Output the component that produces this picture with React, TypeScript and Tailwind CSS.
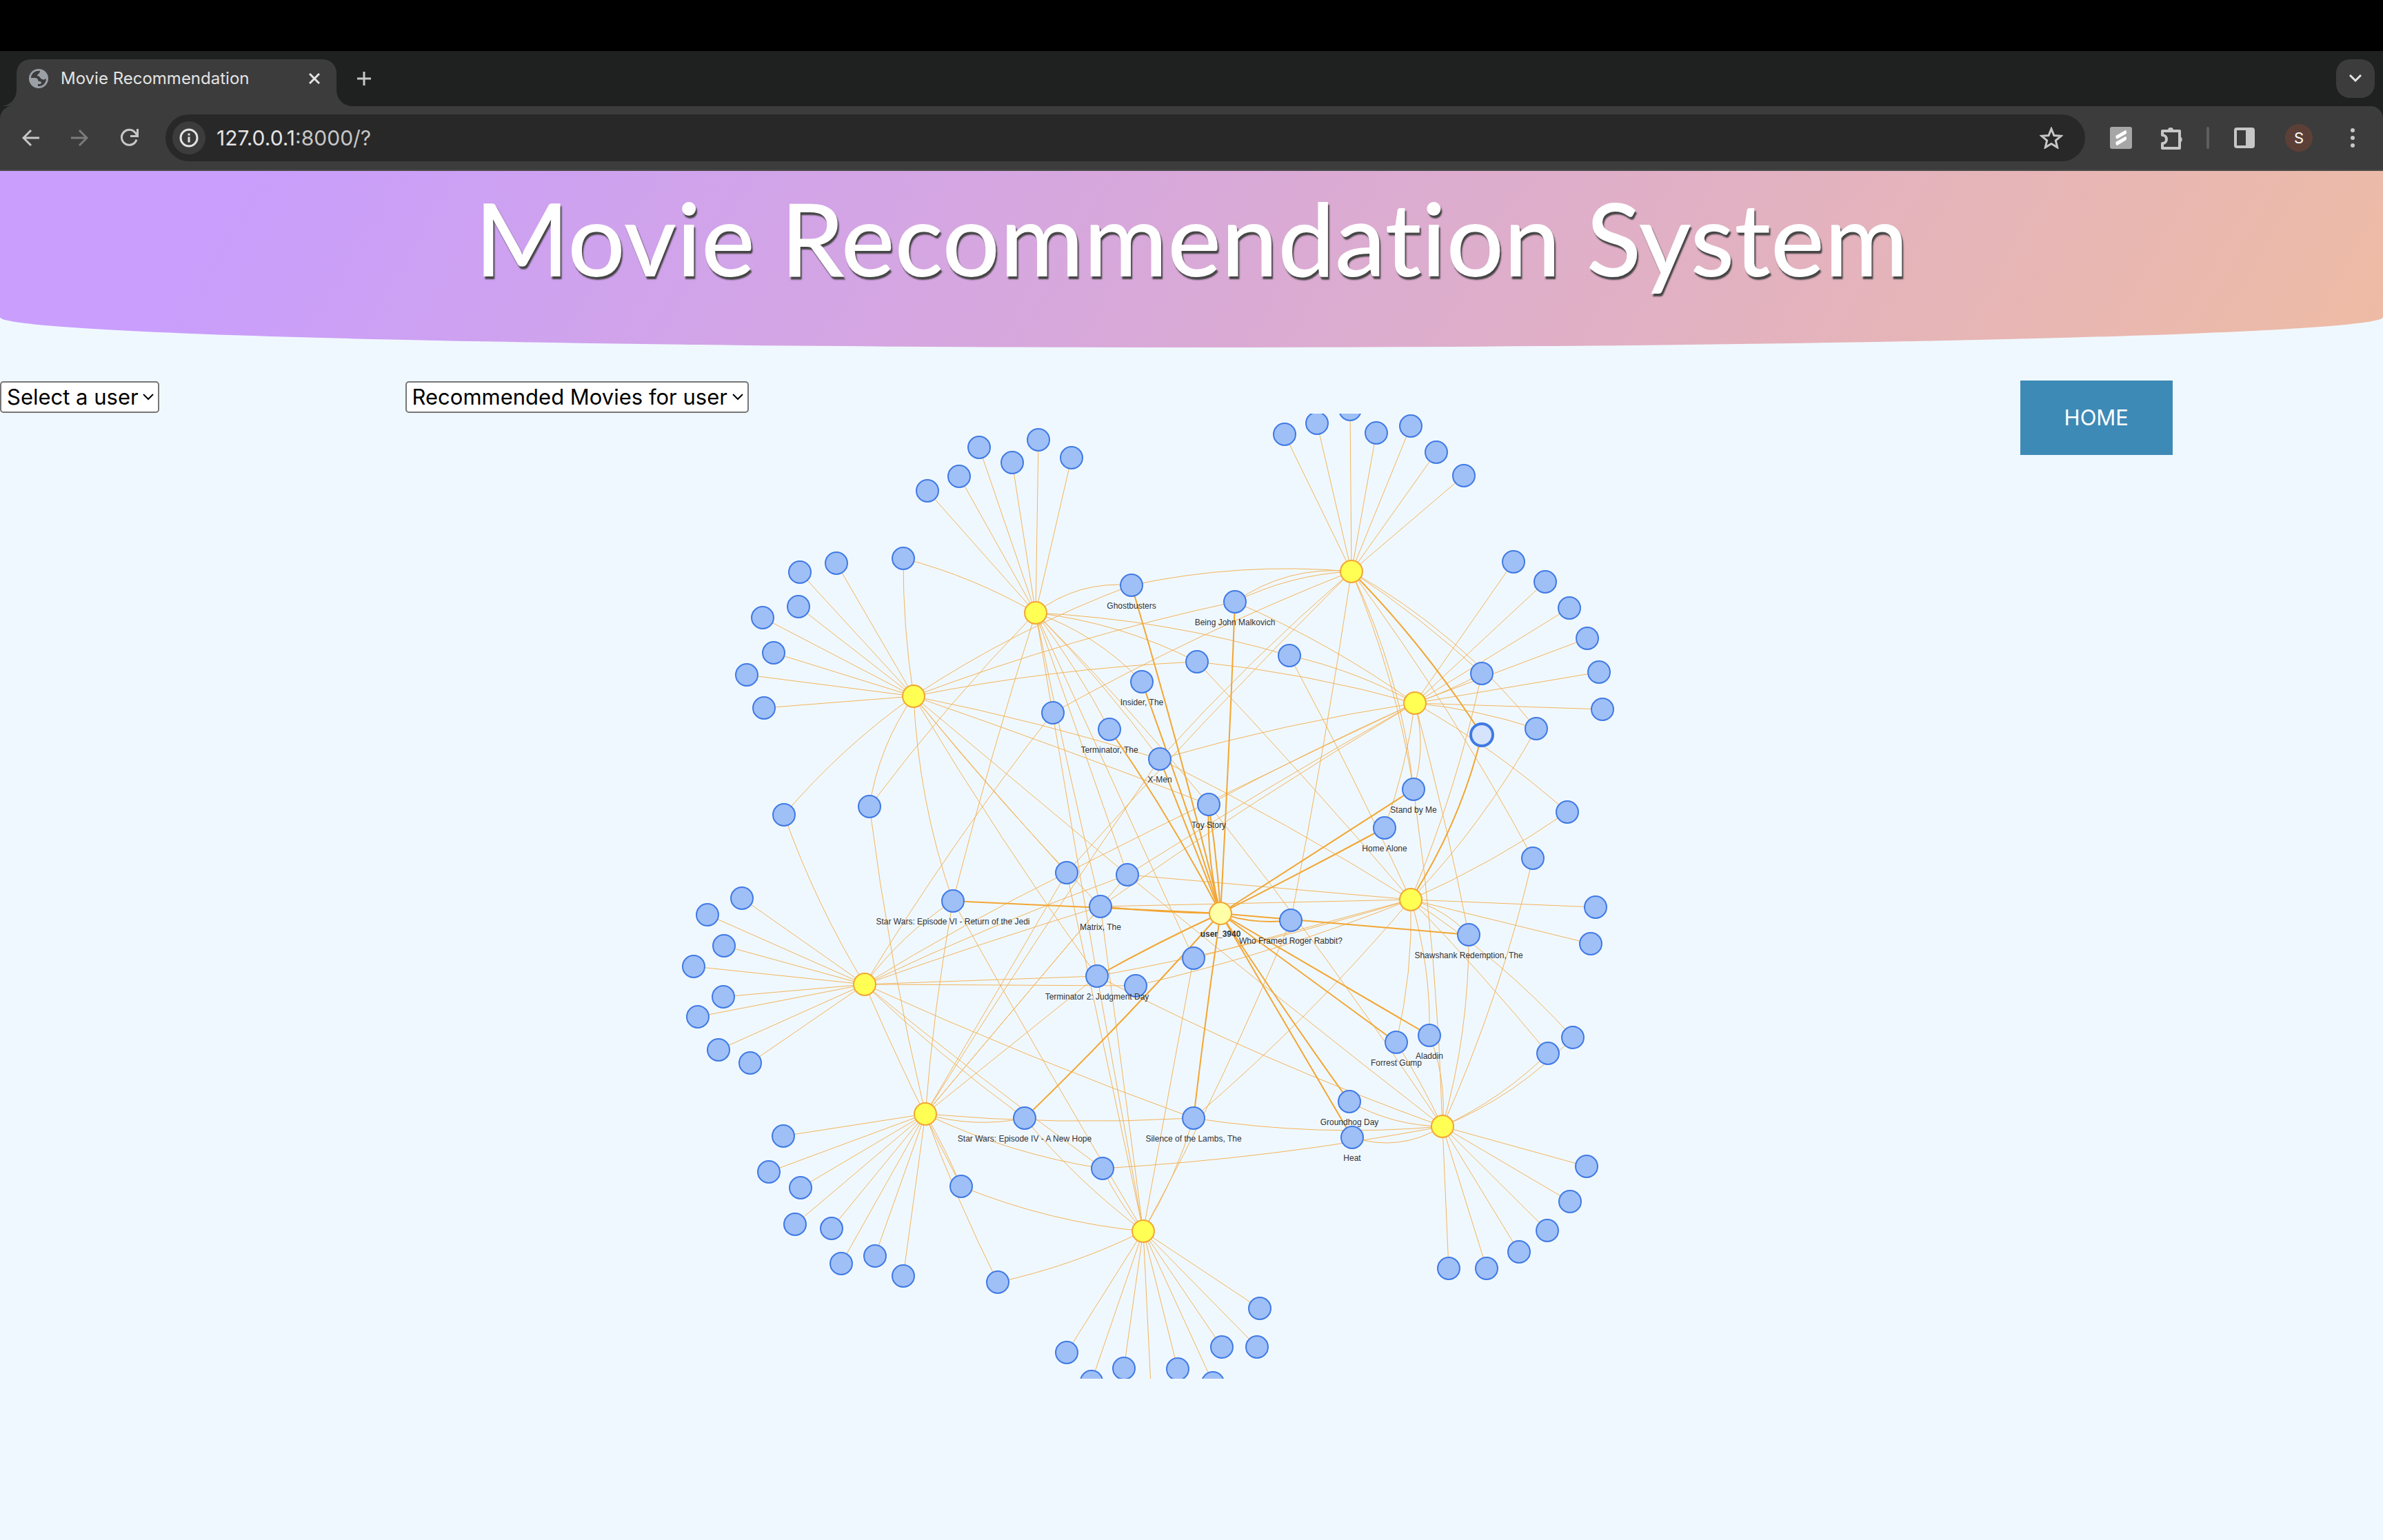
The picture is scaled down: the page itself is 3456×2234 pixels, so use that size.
import React from "react";

type Node = { x: number; y: number; kind?: "user" | "active" | "selected"; label?: string };
type Edge = [string, string, number?, boolean?];

const users: Record<string, Node> = {
  y1: { x: 1502, y: 889, kind: "user" },
  y2: { x: 1325, y: 1010, kind: "user" },
  y3: { x: 1960, y: 829, kind: "user" },
  y4: { x: 2052, y: 1020, kind: "user" },
  y5: { x: 1254, y: 1428, kind: "user" },
  y6: { x: 1342, y: 1616, kind: "user" },
  y7: { x: 1658, y: 1786, kind: "user" },
  y8: { x: 1770, y: 1325, kind: "active", label: "user_3940" },
  y9: { x: 2046, y: 1305, kind: "user" },
  y10: { x: 2092, y: 1634, kind: "user" },
};

const movies: Record<string, Node> = {
  ghost: { x: 1641, y: 849, label: "Ghostbusters" },
  malkovich: { x: 1791, y: 873, label: "Being John Malkovich" },
  insider: { x: 1656, y: 989, label: "Insider, The" },
  terminator: { x: 1609, y: 1058, label: "Terminator, The" },
  xmen: { x: 1682, y: 1101, label: "X-Men" },
  toy: { x: 1753, y: 1167, label: "Toy Story" },
  stand: { x: 2050, y: 1145, label: "Stand by Me" },
  home: { x: 2008, y: 1201, label: "Home Alone" },
  jedi: { x: 1382, y: 1307, label: "Star Wars: Episode VI - Return of the Jedi" },
  matrix: { x: 1596, y: 1315, label: "Matrix, The" },
  t2: { x: 1591, y: 1416, label: "Terminator 2: Judgment Day" },
  roger: { x: 1872, y: 1335, label: "Who Framed Roger Rabbit?" },
  shaw: { x: 2130, y: 1356, label: "Shawshank Redemption, The" },
  forrest: { x: 2025, y: 1512, label: "Forrest Gump" },
  aladdin: { x: 2073, y: 1502, label: "Aladdin" },
  groundhog: { x: 1957, y: 1598, label: "Groundhog Day" },
  heat: { x: 1961, y: 1650, label: "Heat" },
  hope: { x: 1486, y: 1622, label: "Star Wars: Episode IV - A New Hope" },
  silence: { x: 1731, y: 1622, label: "Silence of the Lambs, The" },
  u1: { x: 1527, y: 1034 },
  u2: { x: 1736, y: 960 },
  u3: { x: 1870, y: 951 },
  u4: { x: 2149, y: 977 },
  u5: { x: 2228, y: 1057 },
  u6: { x: 2273, y: 1178 },
  u7: { x: 1547, y: 1266 },
  u8: { x: 1635, y: 1269 },
  u9: { x: 1647, y: 1430 },
  u10: { x: 1731, y: 1390 },
  u11: { x: 1599, y: 1695 },
  u12: { x: 1394, y: 1721 },
  u13: { x: 1447, y: 1860 },
  u14: { x: 2223, y: 1245 },
  u15: { x: 2281, y: 1505 },
  u16: { x: 2245, y: 1528 },
  u17: { x: 1310, y: 810 },
  u18: { x: 1137, y: 1182 },
  u19: { x: 1261, y: 1170 },
  sel: { x: 2149, y: 1066, kind: "selected" },
};

const leaves: Record<string, [number, number][]> = {
  y1: [[1345, 712], [1391, 691], [1420, 649], [1468, 671], [1506, 638], [1554, 664]],
  y2: [[1213, 817], [1160, 830], [1158, 880], [1106, 896], [1122, 947], [1083, 979], [1108, 1027]],
  y3: [[1863, 630], [1910, 614], [1958, 594], [1996, 628], [2046, 618], [2083, 656], [2123, 690]],
  y4: [[2195, 815], [2241, 844], [2276, 882], [2302, 926], [2319, 975], [2324, 1029]],
  y5: [[1076, 1303], [1026, 1327], [1050, 1372], [1006, 1402], [1049, 1446], [1012, 1475], [1042, 1523], [1088, 1542]],
  y6: [[1136, 1648], [1115, 1700], [1161, 1723], [1153, 1776], [1206, 1782], [1220, 1833], [1269, 1822], [1310, 1851]],
  y7: [[1547, 1962], [1583, 2004], [1630, 1985], [1670, 2030], [1708, 1986], [1759, 2006], [1772, 1954], [1823, 1954], [1827, 1898]],
  y9: [[2314, 1316], [2307, 1369]],
  y10: [[2301, 1692], [2277, 1743], [2244, 1785], [2203, 1816], [2156, 1840], [2101, 1840]],
};

// [user, movie, bow in pixels to the right of the direction of travel, highlighted]
const edges: Edge[] = [
  ["y1", "u17", 7], ["y1", "ghost", -14], ["y1", "u2", -11], ["y1", "u3", -11], ["y1", "insider", -11],
  ["y1", "terminator", -4], ["y1", "xmen", -5], ["y1", "toy", -5], ["y1", "t2"], ["y1", "matrix", 2],
  ["y1", "u8"], ["y1", "u10"], ["y1", "jedi", 3], ["y1", "u19", 6],
  ["y2", "u17", -4], ["y2", "u18", 8], ["y2", "u19", 10], ["y2", "ghost", -10], ["y2", "malkovich", -9],
  ["y2", "u2", -8], ["y2", "xmen", -5], ["y2", "toy", -2], ["y2", "u8"], ["y2", "u7", 2], ["y2", "matrix", 5],
  ["y2", "t2", 5], ["y2", "jedi", 11],
  ["y3", "malkovich", 16], ["y3", "malkovich", 9], ["y3", "ghost", 12], ["y3", "u1", 8], ["y3", "xmen", 6],
  ["y3", "u7", 5], ["y3", "roger", -3], ["y3", "stand", -10], ["y3", "stand", -14], ["y3", "u4", -5],
  ["y3", "u5", -17], ["y3", "u14", -9],
  ["y4", "u4", 2], ["y4", "u5", -5], ["y4", "u6", -7], ["y4", "u3", 7], ["y4", "u2", 7], ["y4", "malkovich", 8],
  ["y4", "xmen", 6], ["y4", "toy", 3], ["y4", "u7", 2], ["y4", "u8", 3], ["y4", "matrix", 5], ["y4", "stand", -9],
  ["y4", "home", -5], ["y4", "shaw", -3],
  ["y5", "u18", -7], ["y5", "u1", -7], ["y5", "jedi", -8], ["y5", "u7", -4], ["y5", "u8", -5], ["y5", "matrix", -2],
  ["y5", "t2"], ["y5", "u9"], ["y5", "hope", 5], ["y5", "u11", 3], ["y5", "silence", 5], ["y5", "u12", 3],
  ["y6", "u19", -6], ["y6", "jedi", -4], ["y6", "u7"], ["y6", "xmen", -4], ["y6", "matrix"], ["y6", "u8"],
  ["y6", "t2"], ["y6", "hope", 9], ["y6", "silence", 7], ["y6", "u11", 10], ["y6", "u12", -2], ["y6", "u13", 4],
  ["y7", "u13", -7], ["y7", "u12", -10], ["y7", "hope", -7], ["y7", "u11", -4], ["y7", "jedi", -2], ["y7", "u7"],
  ["y7", "t2"], ["y7", "matrix"], ["y7", "u10"], ["y7", "silence", 6], ["y7", "roger", 7],
  ["y9", "u4", 8], ["y9", "u5", 10], ["y9", "u6", 6], ["y9", "u15", -10], ["y9", "u16", -3], ["y9", "shaw", -7],
  ["y9", "forrest", -7], ["y9", "aladdin", -8], ["y9", "silence", -9], ["y9", "u10"], ["y9", "t2", -7],
  ["y9", "u9", -8], ["y9", "matrix"], ["y9", "u8"], ["y9", "xmen", 5], ["y9", "u2", 3], ["y9", "u3", 3],
  ["y10", "u16", 8], ["y10", "u15", 12], ["y10", "u14", 10], ["y10", "shaw", 10], ["y10", "stand", 7],
  ["y10", "aladdin", 8], ["y10", "forrest", 2], ["y10", "toy", 6], ["y10", "groundhog", -9], ["y10", "t2", -9],
  ["y10", "u8", -2], ["y10", "silence", -11], ["y10", "u11", -8], ["y10", "heat", -15],
  ["y3", "sel", -8, true], ["y9", "sel", 11, true],
  ["y8", "ghost", 3, true], ["y8", "insider", 2, true], ["y8", "terminator", 5, true], ["y8", "xmen", 0, true],
  ["y8", "toy", -6, true], ["y8", "toy", 2, true], ["y8", "malkovich", 1, true], ["y8", "stand", 0, true],
  ["y8", "home", 1, true], ["y8", "roger", 6, true], ["y8", "shaw", 0, true], ["y8", "matrix", -2, true],
  ["y8", "jedi", 0, true], ["y8", "t2", 2, true], ["y8", "hope", -4, true], ["y8", "silence", 1, true],
  ["y8", "groundhog", 2, true], ["y8", "heat", 0, true], ["y8", "forrest", 0, true], ["y8", "aladdin", 0, true],
];

const nodes: Record<string, Node> = { ...movies, ...users };

function curve(a: Node, b: Node, bow: number) {
  const dx = b.x - a.x;
  const dy = b.y - a.y;
  const len = Math.hypot(dx, dy);
  const cx = (a.x + b.x) / 2 - (dy / len) * bow * 2;
  const cy = (a.y + b.y) / 2 + (dx / len) * bow * 2;
  return `M${a.x} ${a.y}Q${cx.toFixed(1)} ${cy.toFixed(1)} ${b.x} ${b.y}`;
}

function Dot({ n }: { n: Node }) {
  if (n.kind === "user") return <circle cx={n.x} cy={n.y} r="16" fill="#ffff54" stroke="#f2a633" strokeWidth="2" />;
  if (n.kind === "active") return <circle cx={n.x} cy={n.y} r="16" fill="#ffffa8" stroke="#f2a633" strokeWidth="2" />;
  if (n.kind === "selected") return <circle cx={n.x} cy={n.y} r="16" fill="#d5e3fc" stroke="#3f7ae4" strokeWidth="4" />;
  return <circle cx={n.x} cy={n.y} r="16" fill="#9fbff7" stroke="#3f7ae4" strokeWidth="2" />;
}

function Graph() {
  const all = Object.values(nodes);
  return (
    <svg viewBox="0 600 3456 1400" className="block w-full" role="img" aria-label="Recommendation graph">
      <g fill="none" stroke="#f2b45a" strokeWidth="1">
        {Object.entries(leaves).map(([k, pts]) =>
          pts.map(([x, y]) => <path key={`${k}-${x}-${y}`} d={`M${users[k].x} ${users[k].y}L${x} ${y}`} />)
        )}
        {edges.filter((e) => !e[3]).map(([a, b, bow = 0], i) => (
          <path key={i} d={curve(nodes[a], nodes[b], bow)} />
        ))}
      </g>
      <g fill="none" stroke="#f2a633" strokeWidth="2">
        {edges.filter((e) => e[3]).map(([a, b, bow = 0], i) => (
          <path key={i} d={curve(nodes[a], nodes[b], bow)} />
        ))}
      </g>
      {Object.values(leaves).flat().map(([x, y]) => <Dot key={`${x}-${y}`} n={{ x, y }} />)}
      {all.map((n, i) => <Dot key={i} n={n} />)}
      <g className="font-['Liberation_Sans',Arial,sans-serif] text-[12px]" fill="#303133" textAnchor="middle">
        {all.filter((n) => n.label).map((n) => (
          <text key={n.label} x={n.x} y={n.y + 34} className={n.kind === "active" ? "font-bold" : "font-normal"}>
            {n.label}
          </text>
        ))}
      </g>
    </svg>
  );
}

function Globe() {
  return (
    <svg viewBox="0 0 28 28" className="size-7 shrink-0" aria-hidden="true">
      <circle cx="14" cy="14" r="14" fill="#9aa0a6" />
      <path d="M16 3C9 2 3 7 3 13h6c2 0 4 1 4 3 0 3 5 1 5 4 0 2-2 2-5 2v3c7 1 12-5 12-11-1 1-4 2-6 1-3-1-3-5-7-5 0-3 4-3 4-7z" fill="#3c3c3c" />
    </svg>
  );
}

function TabStrip() {
  return (
    <div className="flex h-20 items-end bg-[#1f2120]">
      <svg viewBox="0 0 24 24" className="size-6 shrink-0" aria-hidden="true">
        <path d="M24 0v24H0C14 24 24 14 24 0z" fill="#3c3c3c" />
      </svg>
      <div className="flex h-[68px] w-[464px] items-center rounded-t-[20px] bg-[#3c3c3c] pr-6 pb-3 pl-[18px]">
        <Globe />
        <span className="ml-[18px] grow text-[24px] leading-8 text-[#e3e3e3]">Movie Recommendation</span>
        <button aria-label="Close tab" className="text-[#e3e3e3]">
          <svg viewBox="0 0 16 16" className="size-4" fill="none" stroke="currentColor" strokeWidth="3">
            <path d="M1 1l14 14M15 1L1 15" />
          </svg>
        </button>
      </div>
      <svg viewBox="0 0 24 24" className="size-6 shrink-0" aria-hidden="true">
        <path d="M0 0v24h24C10 24 0 14 0 0z" fill="#3c3c3c" />
      </svg>
      <button aria-label="New tab" className="mb-[30px] ml-[6px] text-[#c7c7c7]">
        <svg viewBox="0 0 20 20" className="size-5" fill="none" stroke="currentColor" strokeWidth="3">
          <path d="M10 0v20M0 10h20" />
        </svg>
      </button>
      <button aria-label="Search tabs" className="mr-3 mb-3 ml-auto flex size-14 items-center justify-center rounded-[20px] bg-[#3c3c3c] text-[#e3e3e3]">
        <svg viewBox="0 0 18 12" className="h-3 w-[18px]" fill="none" stroke="currentColor" strokeWidth="3">
          <path d="M1 1l8 8 8-8" />
        </svg>
      </button>
    </div>
  );
}

function Toolbar() {
  return (
    <div className="bg-[#1f2120]">
      <div className="flex h-[94px] items-center rounded-t-[18px] border-b-2 border-[#4a4a4a] bg-[#3c3c3c] pr-9 pl-8 text-[#c7c7c7]">
        <button aria-label="Back">
          <svg viewBox="0 0 26 26" className="size-[26px]" fill="none" stroke="currentColor" strokeWidth="3">
            <path d="M25 13H3M13 2L2 13l11 11" />
          </svg>
        </button>
        <button aria-label="Forward" className="ml-11 text-[#7c7c7c]">
          <svg viewBox="0 0 26 26" className="size-[26px]" fill="none" stroke="currentColor" strokeWidth="3">
            <path d="M1 13h22M13 2l11 11-11 11" />
          </svg>
        </button>
        <button aria-label="Reload" className="ml-[46px]">
          <svg viewBox="0 0 28 28" className="size-7" fill="none" stroke="currentColor" strokeWidth="3">
            <path d="M24 16.5A11 11 0 1 1 22.5 7L25 10.5" />
            <path d="M25.5 1v10.5H15" />
          </svg>
        </button>
        <div className="ml-[38px] flex h-[68px] min-w-0 grow items-center rounded-full bg-[#282828] pr-8 pl-[10px]">
          <button aria-label="Site information" className="flex size-12 shrink-0 items-center justify-center rounded-full bg-[#3c3c3c] text-[#e3e3e3]">
            <svg viewBox="0 0 28 28" className="size-7" fill="none" stroke="currentColor" strokeWidth="3">
              <circle cx="14" cy="14" r="12" />
              <path d="M14 12.5v8M14 7.5v3" />
            </svg>
          </button>
          <div aria-label="Address" className="ml-4 grow text-[30px] leading-9 text-[#c7c7c7]">
            <span className="text-[#e3e3e3]">127.0.0.1</span>:8000/?
          </div>
          <button aria-label="Bookmark this page">
            <svg viewBox="0 0 34 32" className="h-8 w-[34px]" fill="none" stroke="currentColor" strokeWidth="3">
              <path d="M17 3l3.900 9.500 10.100.8-7.700 6.600 2.400 9.900L17 24.500l-8.700 5.300 2.400-9.900L3 13.300l10.100-.8z" />
            </svg>
          </button>
        </div>
        <button aria-label="Scribe extension" className="ml-9">
          <svg viewBox="0 0 32 32" className="size-8">
            <rect width="32" height="32" rx="3" fill="#a6a6a6" />
            <path d="M8.500 13l14-8c1.500 0 2 3 1 5l-13 7.500c-1.500 0-2.500-2.500-2-4.500zM8.500 22l14-8c1.500 0 2 3 1 5L10.500 27c-1.500 0-2.500-3-2-5z" fill="#fff" />
          </svg>
        </button>
        <button aria-label="Extensions" className="ml-10">
          <svg viewBox="0 0 36 36" className="size-9" fill="none" stroke="currentColor" strokeWidth="4" strokeLinejoin="round">
            <path d="M4 8h25v25H4v-7a6 6 0 0 0 0-12z" />
            <path d="M12 7a4 4 0 0 1 8 0zM30 16a5 5 0 0 1 0 9z" fill="currentColor" stroke="none" />
          </svg>
        </button>
        <div className="ml-8 h-8 w-1 rounded-full bg-[#5e5e5e]" />
        <button aria-label="Side panel" className="ml-9">
          <svg viewBox="0 0 30 30" className="size-[30px]">
            <rect x="2" y="2" width="26" height="26" rx="2" fill="none" stroke="currentColor" strokeWidth="4" />
            <path d="M17 2h11v26H17z" fill="currentColor" />
          </svg>
        </button>
        <button className="ml-11 flex size-10 items-center justify-center rounded-full bg-[#5c4037] text-[22px] text-white">S</button>
        <button aria-label="Menu" className="ml-[50px]">
          <svg viewBox="0 0 16 32" className="h-8 w-4" fill="currentColor">
            <circle cx="8" cy="5" r="3" />
            <circle cx="8" cy="16" r="3" />
            <circle cx="8" cy="27" r="3" />
          </svg>
        </button>
      </div>
    </div>
  );
}

function Picker({ label, option }: { label: string; option: string }) {
  return (
    <div className="relative inline-block">
      <select aria-label={label} className="block h-[46px] appearance-none rounded-[5px] border-2 border-[#767676] bg-white pr-[28px] pl-2 text-[31px] leading-[42px] text-black">
        <option>{option}</option>
      </select>
      <svg viewBox="0 0 16 10" className="pointer-events-none absolute top-[18px] right-2 h-[10px] w-4" fill="none" stroke="#000" strokeWidth="2">
        <path d="M1 1l7 7 7-7" />
      </svg>
    </div>
  );
}

export default function App() {
  return (
    <div className="min-h-screen bg-[#f0f8ff] font-[Inter,sans-serif]">
      <div className="h-[74px] bg-black" />
      <TabStrip />
      <Toolbar />
      <header className="h-64 rounded-b-[50%_44px] bg-linear-[120deg] from-[#c99efc] from-10% via-[#d9a9d8] via-50% to-[#eebca4]">
        <h1 className="pt-1 text-center font-[Lato,sans-serif] text-[147px] leading-[184px] font-medium text-white [font-variant-ligatures:none] [text-shadow:2px_4px_2px_#444]">
          Movie Recommendation System
        </h1>
      </header>
      <main>
        <div className="relative mt-12 flex h-12 items-start">
          <div className="mt-px w-[17%]">
            <Picker label="User" option="Select a user" />
          </div>
          <div className="mt-px grow">
            <Picker label="Movies" option="Recommended Movies for user" />
          </div>
          <button className="mr-[305px] bg-[#3d8ab7] px-16 py-[34px] text-[31px] leading-10 text-white">HOME</button>
        </div>
        <Graph />
      </main>
    </div>
  );
}
